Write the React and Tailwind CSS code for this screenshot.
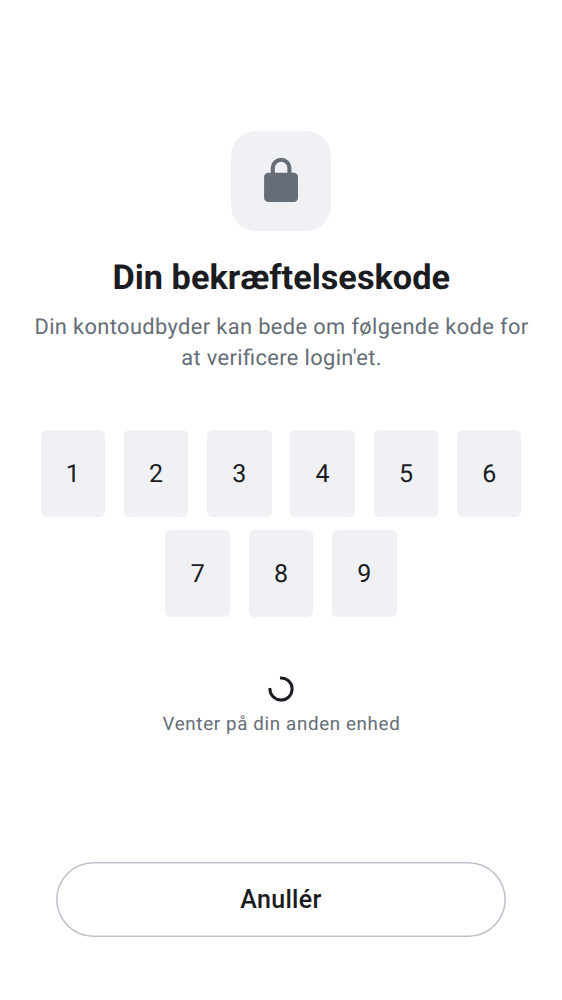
const rows = [
  ['1', '2', '3', '4', '5', '6'],
  ['7', '8', '9'],
];

function LockTile() {
  return (
    <div className="h-[100px] w-[100px] rounded-[25px] bg-[#f0f1f5]">
      <svg viewBox="0 0 100 100" className="h-full w-full" fill="none">
        <path d="M41.8 44V37.1a8.3 8.3 0 0 1 16.6 0V44" stroke="#656d77" strokeWidth="4.1" />
        <rect x="33.1" y="41.8" width="33.9" height="29.3" rx="4.2" fill="#656d77" />
      </svg>
    </div>
  );
}

function Spinner() {
  return (
    <svg viewBox="0 0 28 28" className="h-7 w-7" fill="none">
      <path d="M13 2.95A11.1 11.1 0 1 1 2.95 13" stroke="#1a1c22" strokeWidth="3" />
    </svg>
  );
}

export default function App() {
  return (
    <main className="flex h-[1000px] w-[562px] flex-col items-center bg-white pt-[131px] font-['Roboto',sans-serif] text-[#1a1c22] [text-rendering:geometricPrecision]">
      <LockTile />
      <h1 className="mt-[25px] pl-[0.5px] text-[34.3px] leading-[44px] font-bold whitespace-nowrap">Din bekræftelseskode</h1>
      <p className="mt-[12px] pl-[1px] text-center text-[21.85px] leading-[31.2px] tracking-[0.37px] text-[#656d77] [font-feature-settings:'liga'_1]">
        <span className="whitespace-nowrap">Din kontoudbyder kan bede om følgende kode for</span>
        <br />
        <span>at verificere login'et.</span>
      </p>
      <div className="mt-[55.6px] flex flex-col gap-[13px]">
        {rows.map((row) => (
          <div key={row[0]} className="flex justify-center gap-[18.8px]">
            {row.map((digit) => (
              <div
                key={digit}
                className="flex h-[87px] w-[64.5px] items-center justify-center rounded-[5.5px] bg-[#f0f1f5] pt-[2px] text-[25px]"
              >
                <span>{digit}</span>
              </div>
            ))}
          </div>
        ))}
      </div>
      <div className="mt-[58px] flex flex-col items-center">
        <Spinner />
        <p className="mt-[9px] pl-[1px] text-[18.73px] leading-[25px] tracking-[0.66px] text-[#656d77]">Venter på din anden enhed</p>
      </div>
      <button className="mt-[125px] flex h-[75px] w-[450px] items-center justify-center rounded-full pt-[1px] text-[25px] font-medium tracking-[0.3px] shadow-[inset_0_0_0_1.6px_#bdc1cb]">
        <span>Anullér</span>
      </button>
    </main>
  );
}
